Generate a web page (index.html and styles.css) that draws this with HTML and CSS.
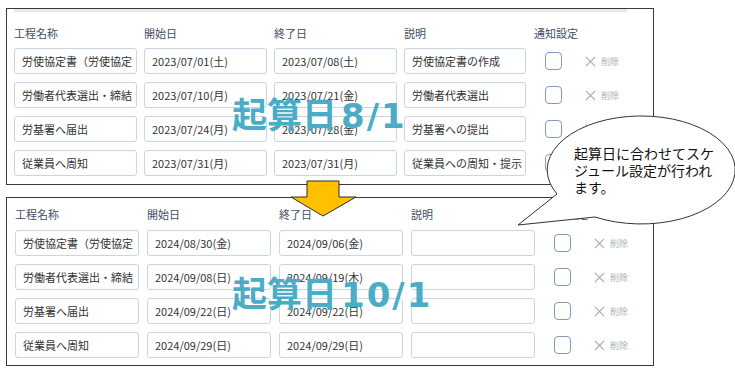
FILE: index.html
```html
<!DOCTYPE html>
<html lang="ja">
<head>
<meta charset="utf-8">
<title>起算日によるスケジュール設定</title>
<link rel="stylesheet" href="styles.css">
</head>
<body>
<div class="canvas">
  <section class="panel panel-a">
    <div class="scrollbar"></div>
    <div class="grid">
      <div class="head">工程名称</div>
      <div class="head">開始日</div>
      <div class="head">終了日</div>
      <div class="head">説明</div>
      <div class="head head-notify">通知設定</div>

      <div class="field">労使協定書（労使協定</div>
      <div class="field">2023/07/01(土)</div>
      <div class="field">2023/07/08(土)</div>
      <div class="field">労使協定書の作成</div>
      <div class="check"></div>
      <div class="del"><span class="x"></span>削除</div>

      <div class="field">労働者代表選出・締結</div>
      <div class="field">2023/07/10(月)</div>
      <div class="field">2023/07/21(金)</div>
      <div class="field">労働者代表選出</div>
      <div class="check"></div>
      <div class="del"><span class="x"></span>削除</div>

      <div class="field">労基署へ届出</div>
      <div class="field">2023/07/24(月)</div>
      <div class="field">2023/07/28(金)</div>
      <div class="field">労基署への提出</div>
      <div class="check"></div>
      <div class="del"><span class="x"></span>削除</div>

      <div class="field">従業員へ周知</div>
      <div class="field">2023/07/31(月)</div>
      <div class="field">2023/07/31(月)</div>
      <div class="field">従業員への周知・提示</div>
      <div class="check"></div>
      <div class="del"><span class="x"></span>削除</div>
    </div>
  </section>

  <section class="panel panel-b">
    <div class="grid">
      <div class="head">工程名称</div>
      <div class="head">開始日</div>
      <div class="head">終了日</div>
      <div class="head">説明</div>
      <div class="head head-notify">通知設定</div>

      <div class="field">労使協定書（労使協定</div>
      <div class="field">2024/08/30(金)</div>
      <div class="field">2024/09/06(金)</div>
      <div class="field"></div>
      <div class="check"></div>
      <div class="del"><span class="x"></span>削除</div>

      <div class="field">労働者代表選出・締結</div>
      <div class="field">2024/09/08(日)</div>
      <div class="field">2024/09/19(木)</div>
      <div class="field"></div>
      <div class="check"></div>
      <div class="del"><span class="x"></span>削除</div>

      <div class="field">労基署へ届出</div>
      <div class="field">2024/09/22(日)</div>
      <div class="field">2024/09/22(日)</div>
      <div class="field"></div>
      <div class="check"></div>
      <div class="del"><span class="x"></span>削除</div>

      <div class="field">従業員へ周知</div>
      <div class="field">2024/09/29(日)</div>
      <div class="field">2024/09/29(日)</div>
      <div class="field"></div>
      <div class="check"></div>
      <div class="del"><span class="x"></span>削除</div>
    </div>
  </section>

  <div class="stamp stamp-a">起算日<span class="num">8/1</span></div>
  <div class="stamp stamp-b">起算日<span class="num">10/1</span></div>

  <svg class="arrow" width="68" height="38" viewBox="0 0 68 38">
    <polygon points="17,1 49,1 49,17 66,17 33,36 1,17 17,17" fill="#FFC000" stroke="#2b2b2b" stroke-width="1"/>
  </svg>

  <svg class="bubble" width="226" height="120" viewBox="0 0 226 120">
    <path d="M47,84 A94,54 0 1 1 85,107 L8,115 Z" fill="#ffffff" stroke="#333333" stroke-width="1"/>
  </svg>
  <div class="bubble-text">起算日に合わせてスケ<br>ジュール設定が行われ<br>ます。</div>
</div>
</body>
</html>
```

FILE: styles.css
```css
* { box-sizing: border-box; }

html, body {
  margin: 0;
  padding: 0;
  background: #ffffff;
}

body {
  font-family: "Noto Sans CJK JP", "Noto Sans", sans-serif;
  color: #333333;
}

.canvas {
  position: relative;
  width: 735px;
  height: 371px;
  padding-top: 8px;
  overflow: hidden;
}

.panel {
  margin-left: 6px;
  width: 648px;
  border: 1px solid #3a3a3a;
  background: #ffffff;
}

.panel-a {
  height: 177px;
  padding-left: 7px;
}

.panel-b {
  margin-top: 12px;
  height: 169px;
  padding-left: 8px;
  padding-top: 8px;
}

.scrollbar {
  width: 613px;
  height: 3px;
  background: #e9e9e9;
  margin-bottom: 12px;
}

.grid {
  display: grid;
  grid-template-columns: 123px 123px 123px 122px 17px 1fr;
  grid-template-rows: 16px repeat(4, 26px);
  column-gap: 7px;
  row-gap: 8px;
  align-items: center;
}

.panel-a .grid > .head { margin-bottom: -2px; }

.panel-b .grid {
  grid-template-columns: 124px 124px 124px 124px 17px 1fr;
  column-gap: 8px;
}

.head {
  font-size: 11px;
  line-height: 16px;
  color: #3d4e63;
  white-space: nowrap;
}

.head-notify {
  grid-column: 5 / 7;
  margin-left: 1px;
}

.field {
  height: 26px;
  border: 1px solid #c8d5e3;
  border-radius: 3px;
  padding-left: 7px;
  font-size: 11px;
  line-height: 24px;
  color: #333333;
  white-space: nowrap;
  overflow: hidden;
  background: #ffffff;
}

.check {
  width: 17px;
  height: 18px;
  border: 1.5px solid #7e9dbd;
  border-radius: 4px;
  margin-left: 12px;
}

.panel-b .check { margin-left: 11px; }

.del {
  display: flex;
  align-items: center;
  gap: 5px;
  margin-left: 28px;
  font-size: 9px;
  color: #a9b3bd;
  white-space: nowrap;
}

.panel-b .del { margin-left: 26px; }

.x {
  position: relative;
  width: 11px;
  height: 11px;
}

.x::before,
.x::after {
  content: "";
  position: absolute;
  left: 5px;
  top: -1px;
  width: 1px;
  height: 13px;
  background: #9aa6b2;
  transform: rotate(45deg);
}

.x::after { transform: rotate(-45deg); }

.stamp {
  position: absolute;
  font-family: "Noto Sans CJK JP", sans-serif;
  font-weight: 700;
  font-size: 35px;
  line-height: 36px;
  color: #4bacc6;
  white-space: nowrap;
}

.stamp .num {
  font-family: "DejaVu Sans", "Noto Sans CJK JP", sans-serif;
  font-size: 34px;
  letter-spacing: 2px;
  margin-left: 4px;
}

.stamp-a { left: 232px; top: 95px; }
.stamp-b { left: 232px; top: 274px; }

.arrow {
  position: absolute;
  left: 290px;
  top: 180px;
}

.bubble {
  position: absolute;
  left: 510px;
  top: 110px;
}

.bubble-text {
  position: absolute;
  left: 574px;
  top: 145px;
  font-size: 14px;
  line-height: 17px;
  color: #111111;
  white-space: nowrap;
}
```
